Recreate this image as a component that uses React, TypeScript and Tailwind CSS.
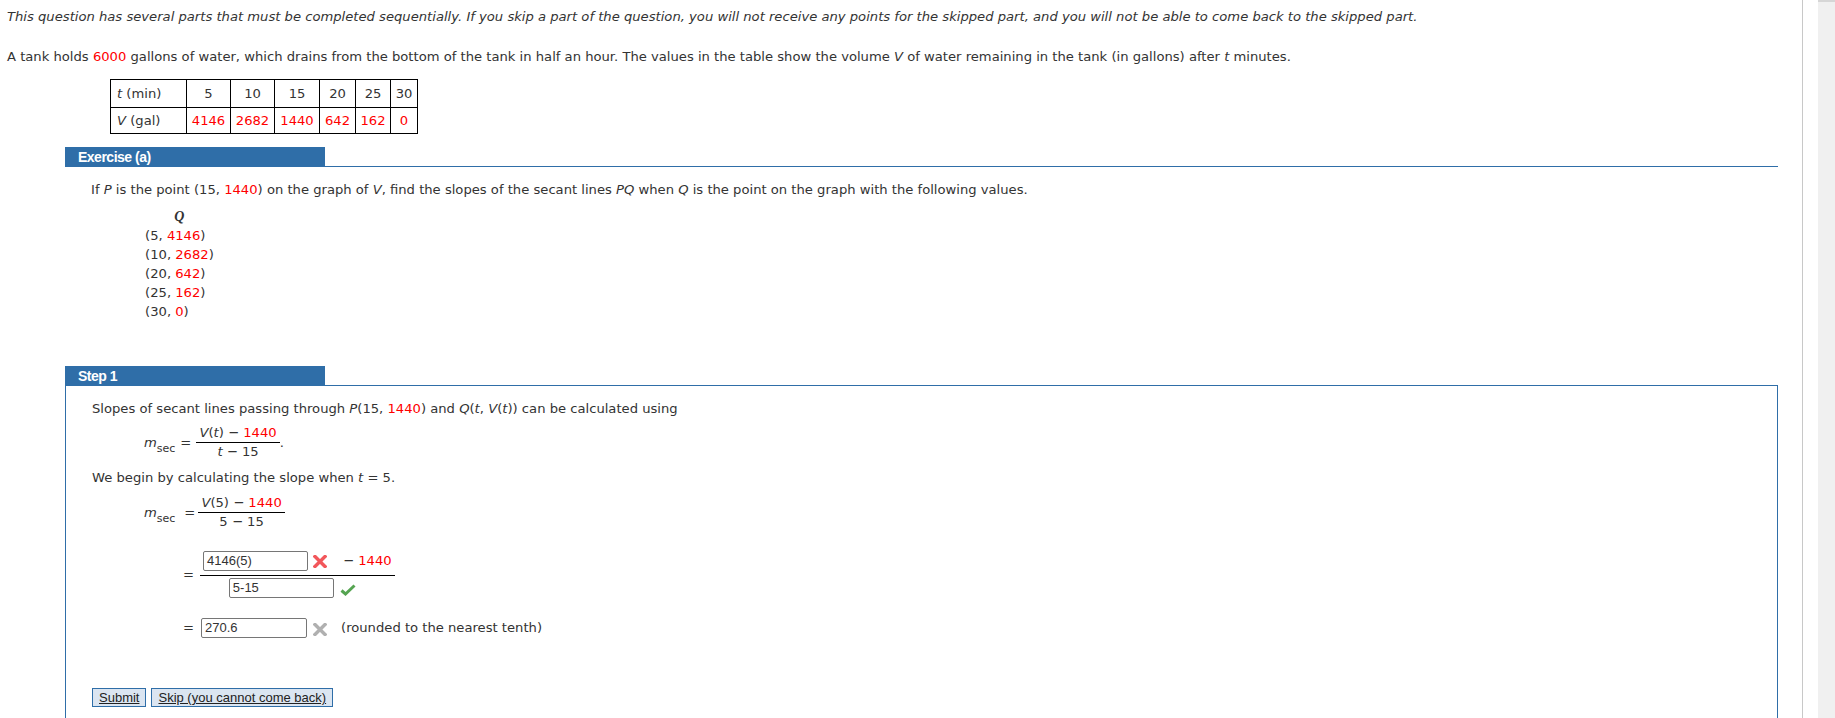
import React from 'react';

const R = ({ children }: { children: React.ReactNode }) => (
  <span className="text-[#ff0000]">{children}</span>
);

function CrossIcon({ color }: { color: string }) {
  return (
    <svg width="14" height="13" viewBox="0 0 14 13">
      <path d="M2 1.5 L12 11.5 M12 1.5 L2 11.5" stroke={color} strokeWidth="3.4" strokeLinecap="square" fill="none" />
    </svg>
  );
}

function CheckIcon() {
  return (
    <svg width="16" height="12" viewBox="0 0 16 12">
      <path d="M1.5 6.5 L5.5 10 L14.5 1.5" stroke="#55a451" strokeWidth="3" strokeLinejoin="miter" fill="none" />
    </svg>
  );
}

function SectionHeader({ title }: { title: string }) {
  return (
    <div className="flex items-end">
      <div className="flex h-[20px] w-[260px] items-center bg-[#2f6ea8] pl-[13px] font-['Liberation_Sans',Arial,sans-serif] text-[14px] font-bold tracking-[-0.5px] text-white">
        {title}
      </div>
      <div className="h-px flex-1 bg-[#2f6ea8]" />
    </div>
  );
}

function MSec() {
  return (
    <span className="flex items-baseline">
      <span className="italic">m</span>
      <span className="relative top-[5px] text-[11px]">sec</span>
    </span>
  );
}

const inputCls =
  "h-[20px] rounded-[2px] border border-[#767676] bg-white pl-[3px] font-['Liberation_Sans',Arial,sans-serif] text-[13px] text-[#333] leading-[18px]";

export default function App() {
  const qs: [string, string][] = [
    ['5', '4146'],
    ['10', '2682'],
    ['20', '642'],
    ['25', '162'],
    ['30', '0'],
  ];
  const ts = ['5', '10', '15', '20', '25', '30'];
  const vs = ['4146', '2682', '1440', '642', '162', '0'];
  const widths = ['w-[44px]', 'w-[44px]', 'w-[45px]', 'w-[36px]', 'w-[35px]', 'w-[27px]'];

  return (
    <div className="flex h-[718px] w-[1835px] overflow-hidden bg-white font-['DejaVu_Sans',Verdana,sans-serif] text-[13.15px] text-[#333]">
      <div className="w-[1803px] border-r border-[#c8c8c8]">
        <div className="pl-[7px] pt-[9px]">
          <p className="italic leading-[16px]">
            This question has several parts that must be completed sequentially. If you skip a part of the question, you will not receive any points for the skipped part, and you will not be able to come back to the skipped part.
          </p>
          <p className="mt-[24px] leading-[16px]">
            A tank holds <R>6000</R> gallons of water, which drains from the bottom of the tank in half an hour. The values in the table show the volume <i>V</i> of water remaining in the tank (in gallons) after <i>t</i> minutes.
          </p>
          <table className="ml-[103px] mt-[14px] border-collapse">
            <tbody>
              <tr className="h-[28px]">
                <td className="w-[76px] border border-black pl-[6px]">
                  <i>t</i> (min)
                </td>
                {ts.map((t, i) => (
                  <td key={t} className={`${widths[i]} border border-black text-center`}>
                    {t}
                  </td>
                ))}
              </tr>
              <tr className="h-[26px]">
                <td className="border border-black pl-[6px]">
                  <i>V</i> (gal)
                </td>
                {vs.map((v) => (
                  <td key={v} className="border border-black text-center text-[#ff0000]">
                    {v}
                  </td>
                ))}
              </tr>
            </tbody>
          </table>
        </div>

        {/* Exercise (a) */}
        <div className="ml-[65px] mr-[24px] mt-[13px]">
          <SectionHeader title="Exercise (a)" />
          <div className="pl-[26px] pt-[15px]">
            <p className="leading-[16px]">
              If <i>P</i> is the point (15, <R>1440</R>) on the graph of <i>V</i>, find the slopes of the secant lines <i>PQ</i> when <i>Q</i> is the point on the graph with the following values.
            </p>
            <div className="ml-[54px] mt-[9px] inline-flex flex-col leading-[19px]">
              <div className="text-center font-['Liberation_Serif',serif] text-[14px] font-bold italic">Q</div>
              {qs.map(([a, b]) => (
                <div key={a}>
                  ({a}, <R>{b}</R>)
                </div>
              ))}
            </div>
          </div>
        </div>

        {/* Step 1 */}
        <div className="ml-[65px] mr-[24px] mt-[45px]">
          <SectionHeader title="Step 1" />
          <div className="h-[400px] border-x border-[#2f6ea8] pl-[26px] pt-[15px]">
            <p className="leading-[16px]">
              Slopes of secant lines passing through <i>P</i>(15, <R>1440</R>) and <i>Q</i>(<i>t</i>, <i>V</i>(<i>t</i>)) can be calculated using
            </p>

            <div className="ml-[52px] mt-[7px] flex items-center">
              <MSec />
              <span className="ml-[5px]">=</span>
              <div className="ml-[5px] flex flex-col items-center">
                <div className="px-[3px] leading-[18px]">
                  <i>V</i>(<i>t</i>) − <R>1440</R>
                </div>
                <div className="h-px w-full bg-black" />
                <div className="leading-[18px]">
                  <i>t</i> − 15
                </div>
              </div>
              <span>.</span>
            </div>

            <p className="mt-[9px] leading-[16px]">
              We begin by calculating the slope when <i>t</i> = 5.
            </p>

            <div className="ml-[52px] mt-[8px] flex items-center">
              <MSec />
              <span className="ml-[9px]">=</span>
              <div className="ml-[3px] flex flex-col items-center">
                <div className="px-[3px] leading-[18px]">
                  <i>V</i>(5) − <R>1440</R>
                </div>
                <div className="h-px w-full bg-black" />
                <div className="leading-[18px]">5 − 15</div>
              </div>
            </div>

            <div className="ml-[91px] mt-[20px] flex items-center">
              <span>=</span>
              <div className="ml-[6px] flex flex-col items-center">
                <div className="flex items-center px-[3px] pb-[4px]">
                  <div className={`${inputCls} w-[105px]`}>4146(5)</div>
                  <span className="ml-[5px] flex">
                    <CrossIcon color="#f2575b" />
                  </span>
                  <span className="ml-[16px]">
                    − <R>1440</R>
                  </span>
                </div>
                <div className="h-px w-full bg-black" />
                <div className="flex items-center pr-[10px] pt-[2px]">
                  <div className={`${inputCls} w-[105px]`}>5-15</div>
                  <span className="ml-[6px] mt-[4px] flex">
                    <CheckIcon />
                  </span>
                </div>
              </div>
            </div>

            <div className="ml-[91px] mt-[20px] flex items-center">
              <span>=</span>
              <div className={`${inputCls} ml-[7px] w-[106px]`}>270.6</div>
              <span className="ml-[6px] mt-[2px] flex">
                <CrossIcon color="#b0b0b0" />
              </span>
              <span className="ml-[14px]">(rounded to the nearest tenth)</span>
            </div>

            <div className="mt-[50px] flex gap-[5px] font-['Liberation_Sans',Arial,sans-serif] text-[13px] text-[#222]">
              <button className="h-[19px] border border-[#2f6ea8] bg-[#dbe5f1] px-[6px] leading-[17px] underline">
                Submit
              </button>
              <button className="h-[19px] border border-[#2f6ea8] bg-[#dbe5f1] px-[6px] leading-[17px] underline">
                Skip (you cannot come back)
              </button>
            </div>
          </div>
        </div>
      </div>
      <div className="w-[15px]" />
      <div className="w-[17px] bg-[#f0f0f0]">
        <div className="h-[2px] bg-[#d6d6d6]" />
      </div>
    </div>
  );
}
